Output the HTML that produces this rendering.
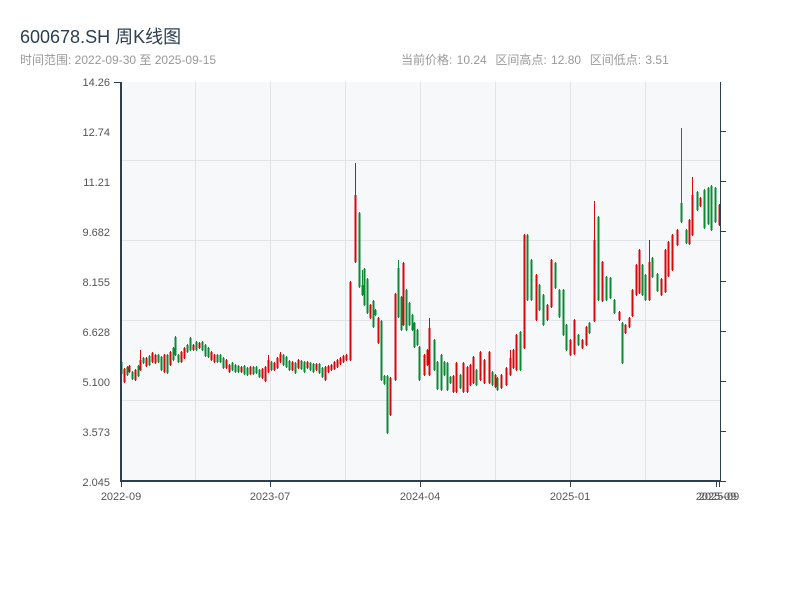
<!DOCTYPE html>
<html><head><meta charset="utf-8">
<style>
body{margin:0;width:800px;height:600px;background:#fff;overflow:hidden;font-family:"Liberation Sans","Noto Sans CJK SC",sans-serif;}
.t{position:absolute;left:20px;top:23px;font-size:18px;color:#2c3e50;}
.s{position:absolute;left:20px;top:51px;font-size:12px;color:#999;}
.r{position:absolute;left:401px;top:51px;font-size:12px;color:#999;word-spacing:1px;}
svg{position:absolute;left:0;top:0;}
</style></head><body>
<div class="t">600678.SH 周K线图</div>
<div class="s">时间范围: 2022-09-30 至 2025-09-15</div>
<div class="r">当前价格: 10.24&nbsp; 区间高点: 12.80&nbsp; 区间低点: 3.51</div>
<svg id="c" width="800" height="600" xmlns="http://www.w3.org/2000/svg" font-family="Liberation Sans, sans-serif" font-size="11">
<rect x="121" y="82" width="599" height="399" fill="#f7f8fa"/>
<g stroke="#e2e4e9" stroke-width="1">
<line x1="121" y1="160.5" x2="720" y2="160.5"/><line x1="121" y1="240.5" x2="720" y2="240.5"/>
<line x1="121" y1="320.5" x2="720" y2="320.5"/><line x1="121" y1="400.5" x2="720" y2="400.5"/>
<line x1="195.5" y1="82" x2="195.5" y2="481"/><line x1="270.5" y1="82" x2="270.5" y2="481"/>
<line x1="345.5" y1="82" x2="345.5" y2="481"/><line x1="420.5" y1="82" x2="420.5" y2="481"/>
<line x1="495.5" y1="82" x2="495.5" y2="481"/><line x1="570.5" y1="82" x2="570.5" y2="481"/>
<line x1="645.5" y1="82" x2="645.5" y2="481"/>
</g>
<g id="k"></g>
<g stroke="#2c3e50" stroke-width="2" fill="none">
<line x1="121" y1="82" x2="121" y2="482"/><line x1="120" y1="481" x2="721" y2="481"/>
</g>
<g stroke="#2c3e50" stroke-width="1">
<line x1="720.5" y1="82" x2="720.5" y2="482"/>
<line x1="114" y1="82.5" x2="121" y2="82.5"/>
<line x1="720" y1="131.5" x2="726" y2="131.5"/><line x1="720" y1="181.5" x2="726" y2="181.5"/>
<line x1="720" y1="231.5" x2="726" y2="231.5"/><line x1="720" y1="281.5" x2="726" y2="281.5"/>
<line x1="720" y1="331.5" x2="726" y2="331.5"/><line x1="720" y1="381.5" x2="726" y2="381.5"/>
<line x1="720" y1="431.5" x2="726" y2="431.5"/><line x1="720" y1="481.5" x2="726" y2="481.5"/>
<line x1="121.5" y1="481" x2="121.5" y2="487"/><line x1="270.5" y1="481" x2="270.5" y2="487"/>
<line x1="420.5" y1="481" x2="420.5" y2="487"/><line x1="570.5" y1="481" x2="570.5" y2="487"/>
<line x1="716.5" y1="481" x2="716.5" y2="487"/><line x1="719.5" y1="481" x2="719.5" y2="487"/>
</g>
<g fill="#555" text-anchor="end">
<text x="110" y="86">14.26</text><text x="110" y="136">12.74</text><text x="110" y="186">11.21</text>
<text x="110" y="236">9.682</text><text x="110" y="286">8.155</text><text x="110" y="336">6.628</text>
<text x="110" y="386">5.100</text><text x="110" y="436">3.573</text><text x="110" y="486">2.045</text>
</g>
<g fill="#555" text-anchor="middle">
<text x="121" y="500">2022-09</text><text x="270" y="500">2023-07</text><text x="420" y="500">2024-04</text>
<text x="570" y="500">2025-01</text><text x="716" y="500">2025-09</text><text x="719" y="500">2025-09</text>
</g>
</svg>
<script>
var d=[
[121,'g',362,374],[124,'r',369,382],[127,'g',367,375],[129,'r',366,372],[132,'g',372,379],[135,'r',370,380],[138,'g',366,376],[140,'r',360,370,350],[143,'g',358,363],[146,'r',358,366],[149,'g',356,365],[152,'r',353,362],[155,'r',355,363],[158,'g',355,362],[161,'g',357,370],[164,'r',355,372],[167,'g',355,373],[170,'r',352,365],[173,'g',348,360],[175,'g',337,355],[178,'g',355,362],[181,'r',352,362],[184,'r',348,358],[187,'g',345,352],[190,'g',338,350],[193,'r',345,350],[196,'g',342,350],[199,'r',343,348],[202,'g',342,350],[205,'g',345,356],[208,'g',348,357],[211,'r',352,360],[214,'r',355,362],[217,'g',355,362],[220,'g',355,362],[223,'g',358,368],[226,'r',360,368],[229,'r',365,372],[232,'g',363,370],[235,'g',365,372],[238,'g',366,372],[241,'r',367,372],[244,'g',366,374],[247,'g',368,375],[250,'r',367,374],[253,'g',367,374],[256,'g',367,373],[259,'g',370,377],[262,'r',369,378],[265,'r',367,381],[268,'r',360,372,355],[271,'g',362,370],[274,'r',363,370],[277,'r',358,368],[280,'r',354,362,352],[283,'g',355,365],[286,'g',357,367],[289,'g',361,370],[292,'r',362,370],[295,'g',363,373],[298,'r',360,368],[301,'g',361,369],[304,'g',362,372],[307,'r',362,368],[310,'g',363,370],[313,'g',364,372],[316,'r',364,370],[319,'g',364,373],[322,'g',368,377],[325,'r',367,380],[328,'r',366,372],[331,'r',365,370],[334,'r',362,369],[337,'r',360,367],[340,'r',358,364],[343,'r',356,362],[346,'r',355,360],[350,'r',282,360],
[355,'r',195,262,163],[359,'g',213,287],[362,'g',285,295,270],[364,'g',269,305],[367,'g',279,313],[370,'r',305,318],[373,'g',301,327],[375,'g',310,315],[378,'r',318,343],[381,'g',321,380],[384,'g',376,384],[387,'g',376,433],[390,'r',378,415],[395,'r',294,380],[398,'g',268,317,260],[401,'g',297,330],[403,'r',263,325],[406,'g',290,330],[409,'g',303,325],[412,'g',315,330],[414,'g',323,347],[417,'g',330,345],[419,'g',347,380],[424,'r',355,375],[427,'r',350,365],[429,'r',328,375,318],[434,'g',340,370],[437,'g',362,389],[441,'g',355,390],[444,'g',362,375],[447,'g',363,390],[450,'g',377,383],[453,'r',376,392],[456,'r',363,392],[460,'g',375,388],[463,'r',363,392],[467,'r',367,392],[470,'r',365,385],[473,'r',357,383],[476,'g',370,385],[480,'r',352,380],[484,'r',360,383],[489,'r',352,383],[492,'g',372,385],[495,'r',375,387],[497,'g',378,390],[501,'r',375,388],[506,'r',368,385],[510,'r',358,375,350],[513,'r',350,368],[516,'r',335,370],[520,'g',332,370],[524,'r',235,348],[527,'g',235,300],[531,'g',260,300],[536,'r',275,320],[539,'g',285,310],[543,'g',295,325],[547,'r',305,320],[551,'r',260,307],[555,'g',263,288],[559,'g',290,317],[563,'g',290,335],[566,'g',325,350],[570,'r',340,355],[574,'r',320,354],[578,'g',335,345],[582,'r',340,348],[586,'r',327,345],[589,'g',323,333],[594,'r',240,321,201],[598,'g',217,300],[602,'r',262,301],[606,'g',277,300],[610,'g',278,298],[614,'g',300,313],[619,'r',312,320],[622,'g',323,363],[625,'r',325,333],[629,'r',318,327],[632,'r',290,316],[636,'r',265,295],[639,'r',250,293],[642,'g',265,295],[645,'g',275,300],[649,'r',262,300,240],[652,'g',258,277],[657,'g',274,291],[661,'r',279,295],[665,'r',250,292],[668,'r',242,276],[672,'r',235,270],[677,'r',230,245],[681,'g',203,222,128],[686,'g',230,243],[689,'r',220,244],[692,'r',195,235,177],[697,'g',192,210],[700,'r',198,206],[704,'g',190,228],[708,'g',188,224],[711,'g',186,230],[715,'g',188,222],[719,'r',205,225]];
var s='';
d.forEach(function(e){var x=e[0],c=e[1]=='r'?'#d7070b':'#0b8a34',t=e[2],b=e[3],h=e[4]||t-1,l=b+1;
s+='<rect x="'+x+'" y="'+h+'" width="1" height="'+(l-h)+'" fill="'+c+'"/>';
s+='<rect x="'+(x-0.5)+'" y="'+t+'" width="2" height="'+Math.max(2,b-t)+'" fill="'+c+'"/>';});
document.getElementById('k').innerHTML=s;
</script>
</body></html>
